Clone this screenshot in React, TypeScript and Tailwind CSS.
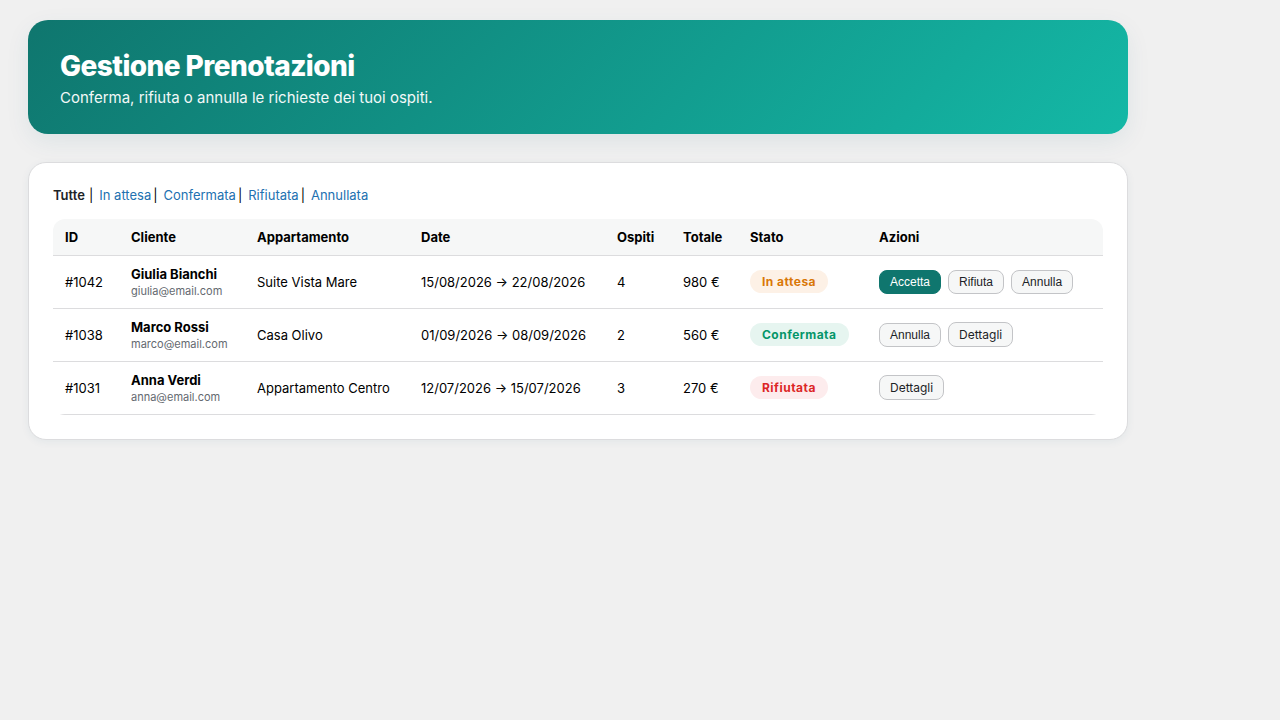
import clsx from "clsx";

type Status = "In attesa" | "Confermata" | "Rifiutata";

type Booking = {
  id: number;
  name: string;
  email: string;
  apartment: string;
  from: string;
  to: string;
  guests: number;
  total: string;
  status: Status;
  actions: string[];
};

const filters = ["In attesa", "Confermata", "Rifiutata", "Annullata"];

const columns = [
  { label: "ID", width: "w-[66px]" },
  { label: "Cliente", width: "w-[126px]" },
  { label: "Appartamento", width: "w-[164px]" },
  { label: "Date", width: "w-[196px]" },
  { label: "Ospiti", width: "w-[66px]" },
  { label: "Totale", width: "w-[67px]" },
  { label: "Stato", width: "w-[129px]" },
  { label: "Azioni", width: "w-auto" }
];

const bookings: Booking[] = [
  {
    id: 1042,
    name: "Giulia Bianchi",
    email: "giulia@email.com",
    apartment: "Suite Vista Mare",
    from: "15/08/2026",
    to: "22/08/2026",
    guests: 4,
    total: "980 €",
    status: "In attesa",
    actions: ["Accetta", "Rifiuta", "Annulla"]
  },
  {
    id: 1038,
    name: "Marco Rossi",
    email: "marco@email.com",
    apartment: "Casa Olivo",
    from: "01/09/2026",
    to: "08/09/2026",
    guests: 2,
    total: "560 €",
    status: "Confermata",
    actions: ["Annulla", "Dettagli"]
  },
  {
    id: 1031,
    name: "Anna Verdi",
    email: "anna@email.com",
    apartment: "Appartamento Centro",
    from: "12/07/2026",
    to: "15/07/2026",
    guests: 3,
    total: "270 €",
    status: "Rifiutata",
    actions: ["Dettagli"]
  }
];

const statusStyles: Record<Status, string> = {
  "In attesa": "bg-[#fdf1e6] text-[#d97706]",
  Confermata: "bg-[#e6f5f0] text-[#059669]",
  Rifiutata: "bg-[#fdeced] text-[#dc2626]"
};

function StatusBadge({ status }: { status: Status }) {
  return (
    <span
      className={clsx(
        "inline-block rounded-full px-3 py-1 text-[12px] leading-[15px] font-bold tracking-[0.04em]",
        statusStyles[status]
      )}
    >
      {status}
    </span>
  );
}

function Action({ label }: { label: string }) {
  if (label === "Dettagli") {
    return (
      <a
        href="#dettagli"
        className="rounded-lg border border-[#c3c4c7] bg-[#f6f7f7] px-2.5 py-1 text-[12px] leading-[15px] text-[#1d2327]"
      >
        {label}
      </a>
    );
  }

  return (
    <button
      type="button"
      className={clsx(
        "rounded-lg border px-2.5 py-1 font-['Liberation_Sans',Arial,sans-serif] text-[12px] leading-[14px]",
        label === "Accetta"
          ? "border-[#0f766e] bg-[#0f766e] text-white"
          : "border-[#c3c4c7] bg-[#f6f7f7] text-[#1d2327]"
      )}
    >
      {label}
    </button>
  );
}

export default function App() {
  return (
    <div className="min-h-screen bg-[#f0f0f0] px-7 py-5 font-[Inter,sans-serif] text-[13px] text-black">
      <main className="max-w-[1100px]">
        <header className="rounded-[20px] bg-[linear-gradient(135deg,#0f766e_0%,#14b8a6_100%)] px-8 py-7 text-white shadow-[0_8px_24px_rgba(15,90,120,0.08)]">
          <h1 className="text-[28px] leading-9 font-extrabold tracking-[-0.02em]">Gestione Prenotazioni</h1>
          <p className="mt-1.5 text-[15px] leading-4 opacity-95">
            Conferma, rifiuta o annulla le richieste dei tuoi ospiti.
          </p>
        </header>

        <section className="mt-7 rounded-[18px] border border-[#dcdcde] bg-white p-6 shadow-[0_2px_8px_rgba(15,90,120,0.06)]">
          <nav className="mb-4 flex leading-4">
            <a href="#tutte" className="mr-0.5 font-semibold text-[#1d2327]">
              Tutte
            </a>
            {filters.map((filter) => (
              <span key={filter}>
                <span className="mr-1.5 ml-0.5">|</span>
                <a href={`#${filter}`} className="text-[#2271b1]">
                  {filter}
                </a>
              </span>
            ))}
          </nav>

          <div className="overflow-hidden rounded-xl">
            <table className="w-full table-fixed text-left whitespace-nowrap">
              <thead>
                <tr className="border-b border-[#dcdcde] bg-[#f6f7f7] leading-4">
                  {columns.map((column) => (
                    <th key={column.label} className={clsx("px-3 py-2.5", column.width)}>
                      {column.label}
                    </th>
                  ))}
                </tr>
              </thead>
              <tbody>
                {bookings.map((booking) => (
                  <tr key={booking.id} className="border-b border-[#dcdcde] leading-4">
                    <td className="px-3 py-2.5">#{booking.id}</td>
                    <td className="px-3 py-2">
                      <strong className="block leading-[18px] font-bold">{booking.name}</strong>
                      <span className="block text-[11px] text-[#646970]">{booking.email}</span>
                    </td>
                    <td className="px-3 py-2.5">{booking.apartment}</td>
                    <td className="px-3 py-2.5">
                      {booking.from} → {booking.to}
                    </td>
                    <td className="px-3 py-2.5">{booking.guests}</td>
                    <td className="px-3 py-2.5">{booking.total}</td>
                    <td className="px-3 pt-2.5 pb-3">
                      <StatusBadge status={booking.status} />
                    </td>
                    <td className="h-[53px] px-3 pt-2.5 pb-3">
                      <div className="flex min-h-[25px] items-end gap-[7px]">
                        {booking.actions.map((action) => (
                          <Action key={action} label={action} />
                        ))}
                      </div>
                    </td>
                  </tr>
                ))}
              </tbody>
            </table>
          </div>
        </section>
      </main>
    </div>
  );
}
